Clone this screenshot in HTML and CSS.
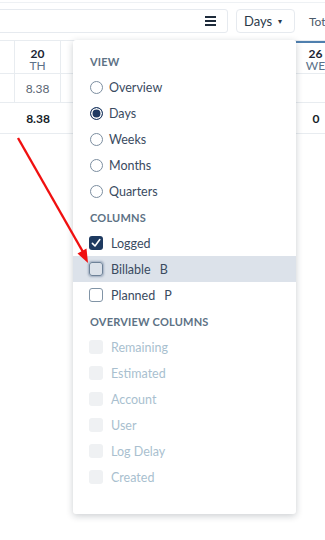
FILE: index.html
```html
<!DOCTYPE html>
<html lang="en">
<head>
  <meta charset="UTF-8" />
  <meta name="viewport" content="width=device-width, initial-scale=1.0" />
  <title>Timesheet</title>
  <link rel="stylesheet" href="styles.css">
</head>
<body>
  <div class="topline"></div>

  <div class="toolbar">
    <div class="search">
      <span class="burger"><i></i><i></i><i></i></span>
    </div>
    <div class="view-btn">Days <span class="caret">&#9662;</span></div>
    <div class="total">Total</div>
  </div>

  <div class="grid">
    <div class="cell head"></div>
    <div class="cell head day"><b>20</b><span>TH</span></div>
    <div class="cell head"></div>
    <div class="cell head"></div>
    <div class="cell head"></div>
    <div class="cell head"></div>
    <div class="cell head"></div>
    <div class="cell head day today"><b>26</b><span>WE</span></div>
    <div class="cell head"></div>

    <div class="cell"></div>
    <div class="cell">8.38</div>
    <div class="cell"></div>
    <div class="cell"></div>
    <div class="cell"></div>
    <div class="cell"></div>
    <div class="cell"></div>
    <div class="cell"></div>
    <div class="cell"></div>

    <div class="cell sum"></div>
    <div class="cell sum">8.38</div>
    <div class="cell sum"></div>
    <div class="cell sum"></div>
    <div class="cell sum"></div>
    <div class="cell sum"></div>
    <div class="cell sum"></div>
    <div class="cell sum">0</div>
    <div class="cell sum"></div>
  </div>

  <div class="menu">
    <div class="menu-head">View</div>
    <div class="menu-item"><span class="radio"></span>Overview</div>
    <div class="menu-item"><span class="radio on"></span>Days</div>
    <div class="menu-item"><span class="radio"></span>Weeks</div>
    <div class="menu-item"><span class="radio"></span>Months</div>
    <div class="menu-item"><span class="radio"></span>Quarters</div>

    <div class="menu-head">Columns</div>
    <div class="menu-item"><span class="check on"><svg viewBox="0 0 14 14" width="14" height="14"><path d="M3.4 7.4 L6 10 L10.8 3.6" fill="none" stroke="#fff" stroke-width="1.6" stroke-linecap="round" stroke-linejoin="round"/></svg></span>Logged</div>
    <div class="menu-item hover"><span class="check focus"></span>Billable<span class="key">B</span></div>
    <div class="menu-item"><span class="check"></span>Planned<span class="key">P</span></div>

    <div class="menu-head">Overview columns</div>
    <div class="menu-item off"><span class="check"></span>Remaining</div>
    <div class="menu-item off"><span class="check"></span>Estimated</div>
    <div class="menu-item off"><span class="check"></span>Account</div>
    <div class="menu-item off"><span class="check"></span>User</div>
    <div class="menu-item off"><span class="check"></span>Log Delay</div>
    <div class="menu-item off"><span class="check"></span>Created</div>
  </div>

  <svg class="arrow" width="325" height="540" viewBox="0 0 325 540">
    <line x1="18" y1="138" x2="83" y2="252" stroke="#f01010" stroke-width="2.4" />
    <polygon points="88,263 77.5,253.5 86.5,248.5" fill="#f01010" />
  </svg>
</body>
</html>
```

FILE: styles.css
```css
body {
  margin: 0;
  width: 325px;
  height: 540px;
  overflow: hidden;
  position: relative;
  font-family: Lato, "Open Sans", sans-serif;
  font-size: 12px;
  color: #3a4b5f;
  background: #fff;
}
.topline {
  height: 2px;
  border-bottom: 1px solid #eef1f4;
}
.toolbar {
  display: flex;
  align-items: center;
  height: 24px;
  margin-top: 6px;
  white-space: nowrap;
}
.search {
  flex: none;
  width: 234px;
  height: 24px;
  box-sizing: border-box;
  margin-left: -6px;
  border: 1px solid #e6eaef;
  border-radius: 3px;
  display: flex;
  align-items: center;
  justify-content: flex-end;
  padding-right: 11px;
}
.burger {
  display: flex;
  flex-direction: column;
  gap: 2px;
}
.burger i {
  display: block;
  width: 11px;
  height: 2px;
  background: #1e2b3b;
}
.view-btn {
  flex: none;
  width: 59px;
  height: 24px;
  box-sizing: border-box;
  margin-left: 8px;
  border: 1px solid #e6eaef;
  border-radius: 4px;
  display: flex;
  align-items: center;
  padding-left: 7px;
  font-size: 13px;
  color: #2a3849;
}
.caret {
  font-size: 8px;
  margin-left: 6px;
  color: #2a3849;
}
.total {
  margin-left: 14px;
  font-size: 12px;
  color: #4b5a6a;
}
.grid {
  display: grid;
  grid-template-columns: 15px 46px repeat(5, 47px) 40px 40px;
  grid-template-rows: 33px 29px 31px;
  margin-top: 7px;
  border-top: 1px solid #e8ecf0;
  width: 390px;
}
.cell {
  box-sizing: border-box;
  border-bottom: 1px solid #e8ecf0;
  border-right: 1px solid #e8ecf0;
  display: flex;
  align-items: center;
  justify-content: center;
  color: #5a6673;
}
.cell.sum {
  border-right: none;
  font-weight: bold;
  color: #151d27;
}
.head.day {
  flex-direction: column;
  justify-content: flex-start;
  line-height: 12px;
  padding-top: 7px;
}
.head.day b {
  font-size: 12px;
  color: #1b2533;
}
.head.day span {
  font-size: 12px;
  color: #5b7189;
}
.head.today {
  box-shadow: inset 0 2px 0 #4f7fae;
}
.menu {
  position: absolute;
  left: 73px;
  top: 40px;
  width: 223px;
  height: 474px;
  box-sizing: border-box;
  padding-top: 8px;
  background: #fff;
  border-radius: 3px;
  box-shadow: 0 2px 7px rgba(20, 30, 45, 0.22);
}
.menu-head {
  height: 26px;
  display: flex;
  align-items: center;
  padding-left: 17px;
  font-size: 11px;
  font-weight: bold;
  text-transform: uppercase;
  letter-spacing: 0.2px;
  color: #5d7285;
}
.menu-item {
  height: 26px;
  display: flex;
  align-items: center;
  padding-left: 16px;
  font-size: 12.5px;
}
.menu-item.hover {
  background: #dce2ea;
}
.menu-item.off {
  color: #a9bfcf;
}
.radio {
  width: 13px;
  height: 13px;
  box-sizing: border-box;
  margin-left: 1px;
  margin-right: 6px;
  border: 1.5px solid #7c8ea0;
  border-radius: 50%;
}
.radio.on {
  border-color: #1f3a62;
  background: #1f3a62;
  box-shadow: inset 0 0 0 1.5px #fff;
}
.check {
  width: 14px;
  height: 14px;
  box-sizing: border-box;
  margin-right: 8px;
  border: 1.5px solid #8194a6;
  border-radius: 3px;
  display: flex;
}
.check.on {
  border: none;
  background: #1e3a60;
}
.check.focus {
  border-color: #6e8298;
  box-shadow: 0 0 2px 1px rgba(40, 70, 110, 0.35);
}
.off .check {
  border: none;
  background: #eff1f3;
}
.key {
  margin-left: 9px;
}
.arrow {
  position: absolute;
  left: 0;
  top: 0;
  pointer-events: none;
}
```
